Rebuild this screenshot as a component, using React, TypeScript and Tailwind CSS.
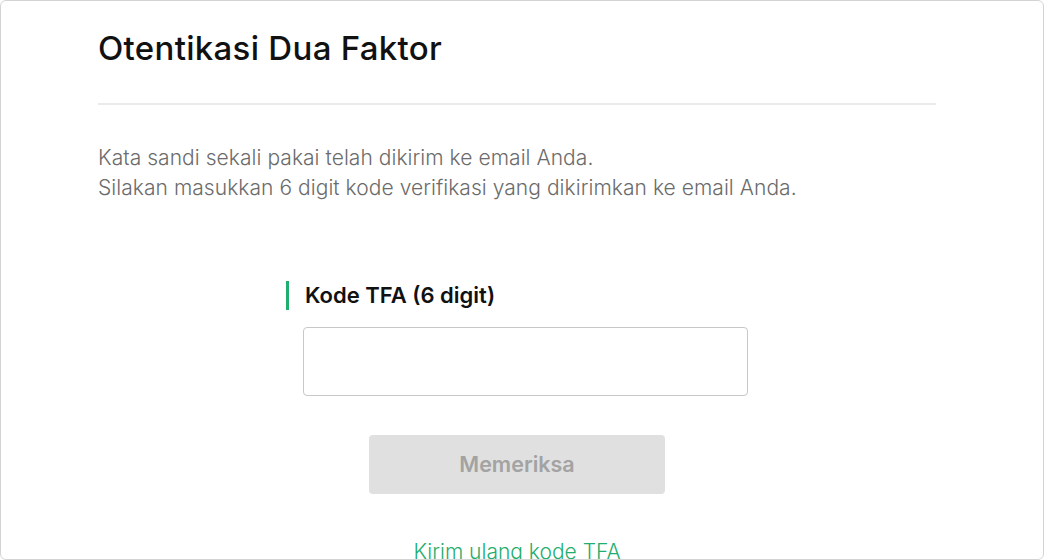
export default function App() {
  return (
    <div
      className="h-[560px] w-[1044px] overflow-hidden bg-white"
      style={{ fontFamily: 'Inter, "Noto Sans", sans-serif' }}
    >
      <div className="h-[560px] overflow-hidden rounded-md border border-[#d4d4d4] pl-[97px] pr-[107px]">
        {/* Header */}
        <h1 className="pt-[26px] text-[33px] font-medium leading-[42px] tracking-[0.3px] text-[#111]">
          Otentikasi Dua Faktor
        </h1>
        <div className="mt-[34px] h-[2px] bg-[#ebebeb]" />

        {/* Description */}
        <div className="mt-[38px] text-[21px] font-light leading-[30px] tracking-[0.05px] text-[#6b6b6b]">
          <p>Kata sandi sekali pakai telah dikirim ke email Anda.</p>
          <p>Silakan masukkan 6 digit kode verifikasi yang dikirimkan ke email Anda.</p>
        </div>

        {/* Form */}
        <div className="mx-auto mt-[78px] w-[462px]">
          <div className="flex h-[29px] items-center border-l-[3px] border-[#1fae6e] pl-[16px] text-[22px] font-semibold text-[#111]">
            Kode TFA (6 digit)
          </div>
          <input
            type="text"
            className="ml-[17px] mt-[17px] h-[69px] w-[445px] rounded-[4px] border border-[#c8c8c8] bg-white px-3 text-[18px] outline-none"
          />
        </div>

        <div className="mt-[39px] flex justify-center">
          <button
            type="button"
            className="h-[59px] w-[296px] rounded-[4px] bg-[#e0e0e0] text-[21.5px] font-semibold text-[#a3a3a3]"
          >
            Memeriksa
          </button>
        </div>

        <div className="mt-[42px] text-center text-[21px] font-light text-[#1fae6e]">
          <a href="#">Kirim ulang kode TFA</a>
        </div>
      </div>
    </div>
  )
}
